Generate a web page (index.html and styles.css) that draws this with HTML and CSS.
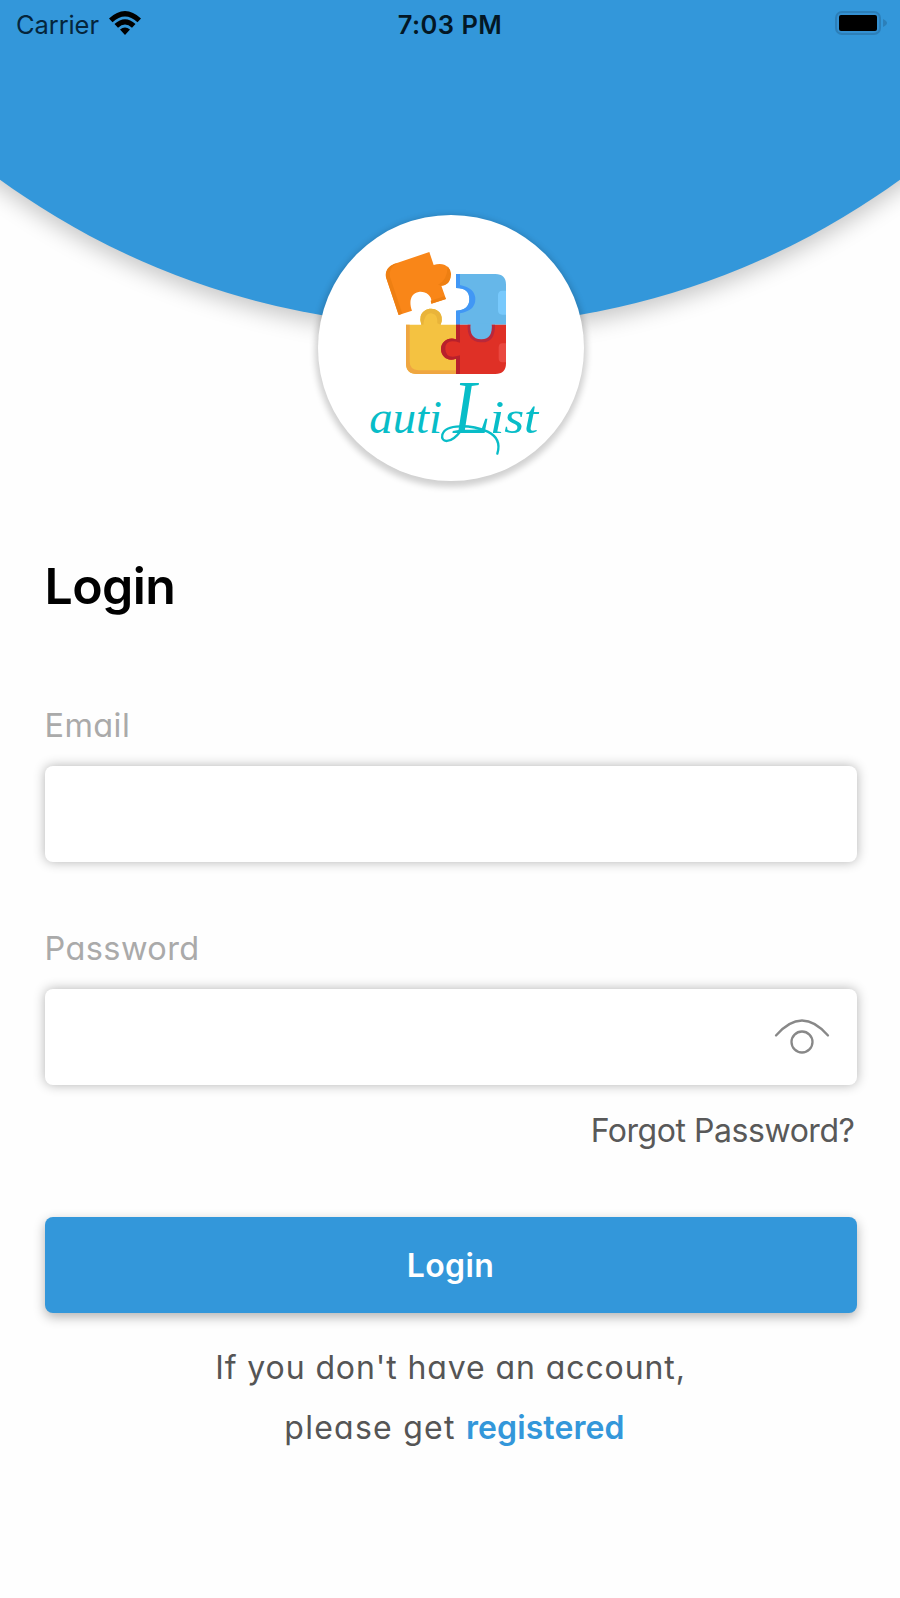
FILE: index.html
```html
<!DOCTYPE html>
<html lang="en">
<head>
<meta charset="utf-8">
<title>autiList</title>
<link rel="stylesheet" href="styles.css">
</head>
<body>
<div class="screen">
  <header class="header">
    <div class="arc"></div>
    <div class="status">
      <div class="carrier"><span class="carrier-name">Carrier</span>
        <svg class="wifi" viewBox="0 0 34 26"><path d="M1 8.500Q17-6.500 33 8.500L29.500 12.200Q17 .8 4.500 12.200ZM6.500 14Q17 4.500 27.500 14L24 17.700Q17 11.500 10 17.700ZM12 19.600Q17 15.500 22 19.600L17 25Z"/></svg>
      </div>
      <time class="clock">7:03 PM</time>
      <svg class="battery" viewBox="0 0 54 26"><rect x="1" y="1" width="46" height="24" rx="7" fill="#2c7fb9"/><rect x="3" y="3" width="42" height="20" rx="5" fill="#3491d3"/><path d="M49 9Q53 11 53 13T49 17Z" fill="#2c7fb9"/><rect x="5" y="5" width="38" height="16" rx="2"/></svg>
    </div>
    <div class="logo">
      <svg class="logo-art" viewBox="54 45 798 798">
        <path d="M468 222H586Q618 222 618 254V374H468V332Q508 330 508 297T468 264Z" fill="#66b7e9"/>
        <path d="M468 222H480V255Q526 264 526 298T480 340V374H468V332Q508 330 508 297T468 264Z" fill="#4197f5"/>
        <path d="M618 272H607Q594 272 594 286V330Q594 344 607 344H618Z" fill="#78c9fc"/>
        <path d="M318 374H364Q359 360 362 349C370 318 420 318 425 352Q427 362 422 374H468V522H350Q318 522 318 490Z" fill="#f4c241"/>
        <path d="M318 374H329V484Q329 510 355 511H468V522H350Q318 522 318 490Z" fill="#efa641"/>
        <path d="M364 374Q359 360 362 349C370 318 420 318 425 352Q427 362 422 374L412 370Q414 342 394 340T370 374Z" fill="#e9b43a"/>
        <path d="M468 374H618V490Q618 522 586 522H468V476C444 486 423 470 423 447S446 410 468 418Z" fill="#df3026"/>
        <path d="M468 374H480V428Q435 414 436 447T480 466V522H468V476C444 486 423 470 423 447S446 410 468 418Z" fill="#b8202c"/>
        <path d="M618 430H607Q596 430 596 443V474Q596 487 607 487H618Z" fill="#ea4840"/>
        <path d="M503 374Q500 425 543 427T585 374Z" fill="#b9283b"/>
        <path d="M512 370Q506 417 543 418T575 370Z" fill="#66b7e9"/>
        <path d="M388 156L401 195C431 185 452 200 452 224S440 255 424 257L438 297L394 311C398 288 378 273 356 276S325 304 336 332L296 345L258 232Q253 204 282 192Z" fill="#f98618"/>
        <path d="M282 192L293 189Q264 204 270 231L307 341L296 345L258 232Q253 204 282 192M424 257L414 254Q442 242 443 199Q463 222 444 248Q435 256 424 257M438 297L394 311L392 302L433 289" fill="#ee7f12"/>
        <text class="wordmark" x="208" y="700" textLength="218" lengthAdjust="spacingAndGlyphs">auti</text>
        <text class="wordmark wordmark-cap" x="460" y="698" textLength="112" lengthAdjust="spacingAndGlyphs">L</text>
        <text class="wordmark" x="570" y="700" textLength="145" lengthAdjust="spacingAndGlyphs">ist</text>
        <path class="swash" d="M482 693C452 734 421 728 427 704C437 670 513 674 563 695Q606 716 592 761"/>
      </svg>
    </div>
  </header>
  <main class="content">
    <h1 class="title">Login</h1>
    <form class="form">
      <label class="label" for="email">Email</label>
      <div class="field"><input class="input" id="email" type="email"></div>
      <label class="label label-password" for="password">Password</label>
      <div class="field"><input class="input" id="password" type="password">
        <svg class="eye" viewBox="0 0 56 36"><path d="M2 16.500Q28-13.500 54 16.500"/><circle cx="28" cy="23" r="10.500"/></svg>
      </div>
      <a class="forgot"><span class="forgot-text">Forgot Password?</span></a>
      <button class="submit" type="button">Login</button>
    </form>
    <p class="signup"><span class="signup-line">If you don't have an account,</span><span class="signup-line second">please get <a class="register">registered</a></span></p>
  </main>
</div>
</body>
</html>
```
FILE: styles.css
```css
* { box-sizing: border-box; }
body { margin: 0; background: #fefefe; font-family: Inter, "Liberation Sans", sans-serif; }
.screen { width: 900px; height: 1598px; overflow: hidden; }
.header { position: relative; height: 481px; }
.arc { position: absolute; left: -315px; top: -1204px; width: 1530px; height: 1530px; border-radius: 50%; background: #3397da; box-shadow: 0 8px 22px rgba(0, 0, 0, .22); }
.status { position: relative; display: grid; grid-template-columns: 1fr auto 1fr; align-items: center; height: 48px; padding: 0 12px 0 16px; font-size: 25.500px; }
.carrier { display: flex; align-items: center; gap: 9px; color: #05253c; }
.carrier-name { letter-spacing: -.1px; }
.wifi { width: 34px; height: 26px; margin-top: -3px; fill: #000; }
.clock { margin-left: -4px; font-weight: 600; letter-spacing: .45px; color: #031725; }
.battery { justify-self: end; width: 54px; height: 26px; margin-top: -2px; }
.logo { position: relative; width: 266px; height: 266px; margin: 167px auto 0; border-radius: 50%; background: #fff; box-shadow: 0 3px 6px 3px rgba(0, 0, 0, .18); left: .5px; }
.logo-art { display: block; width: 266px; height: 266px; }
.wordmark { font: italic 140px "Liberation Serif", serif; fill: #08bdc8; }
.wordmark-cap { font-size: 230px; }
.swash { fill: none; stroke: #08bdc8; stroke-width: 7; stroke-linecap: round; }
.content { padding: 75px 43.500px 0 44.500px; }
.title { margin: 0 0 90px; font-size: 50px; line-height: 60px; font-weight: 600; letter-spacing: -.6px; color: #000; }
.form { display: flex; flex-direction: column; }
.label { font-size: 32.500px; line-height: 40px; font-weight: 400; letter-spacing: .4px; color: #aaa; font-feature-settings: "cv11"; }
.label-password { margin-top: 67px; }
.field { display: flex; align-items: center; height: 96px; margin-top: 20px; padding-right: 27px; border-radius: 8px; background: #fff; box-shadow: 0 0 12px rgba(0, 0, 0, .3); }
.input { flex: 1; height: 96px; border: 0; outline: 0; background: transparent; padding: 0 24px; font: inherit; font-size: 32px; }
.eye { width: 56px; height: 36px; fill: none; stroke: #888; stroke-width: 2.300; stroke-linecap: round; }
.forgot { display: flex; justify-content: flex-end; margin-top: 26px; padding-right: 2px; font-size: 32px; line-height: 40px; color: #595959; }
.forgot-text { letter-spacing: -.45px; }
.submit { height: 96px; margin-top: 66px; padding: 0; border: 0; border-radius: 8px; background: #3397da; color: #fff; font: 600 32px Inter, sans-serif; letter-spacing: .4px; box-shadow: 0 4px 12px rgba(0, 0, 0, .3); }
.signup { margin: 25px 0 0; text-align: center; font-size: 32px; line-height: 60px; letter-spacing: .9px; color: #555; font-feature-settings: "cv11"; }
.signup-line { display: block; }
.second { letter-spacing: 1.250px; padding-left: 8px; }
.register { color: #3397da; font-weight: 600; letter-spacing: .1px; font-feature-settings: normal; }
```
